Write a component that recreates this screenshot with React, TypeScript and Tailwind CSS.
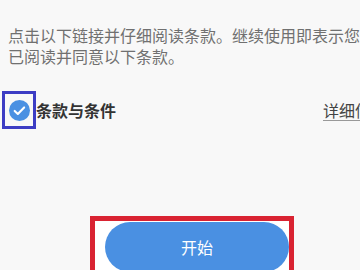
import React from 'react';

const CheckIcon = () => (
  <svg width="21" height="21" viewBox="0 0 24 24">
    <circle cx="12" cy="12" r="12" fill="#4a90e2" />
    <path d="M6.5 12.5l3.6 3.4 7.2-7.4" fill="none" stroke="#ffffff" strokeWidth="2.4" strokeLinecap="round" strokeLinejoin="round" />
  </svg>
);

export default function App() {
  const [checked, setChecked] = React.useState(true);

  return (
    <div
      className="w-[360px] h-[270px] overflow-hidden bg-[#f8f8f8] flex flex-col"
      style={{ fontFamily: '"Noto Sans CJK SC", "Noto Sans", sans-serif' }}
    >
      {/* Texte d'introduction */}
      <p className="pt-[25px] pl-[8px] text-[16px] leading-[21px] text-[#707070] whitespace-nowrap">
        点击以下链接并仔细阅读条款。继续使用即表示您
        <br />
        已阅读并同意以下条款。
      </p>

      {/* Case à cocher */}
      <div className="mt-[24px] pl-[2px] w-[387px] flex items-center justify-between">
        <div className="flex items-center">
          <button
            onClick={() => setChecked(!checked)}
            className="w-[34px] h-[38px] border-[3px] border-[#3d3dc4] flex items-center justify-center"
          >
            {checked && <CheckIcon />}
          </button>
          <span className="text-[16px] font-bold text-[#333333]">条款与条件</span>
        </div>
        <a className="text-[16px] text-[#444444] underline decoration-[#999999] underline-offset-[3px] whitespace-nowrap">
          详细信息
        </a>
      </div>

      {/* Bouton */}
      <div className="mt-[87px] ml-[90px] w-[204px] h-[60px] border-[5px] border-b-0 border-[#d92332] bg-white pl-[10px] pt-[1px] flex items-start">
        <button className="w-[184px] h-[50px] rounded-full bg-[#4a90e2] text-white text-[16px] flex items-center justify-center">
          开始
        </button>
      </div>
    </div>
  );
}
